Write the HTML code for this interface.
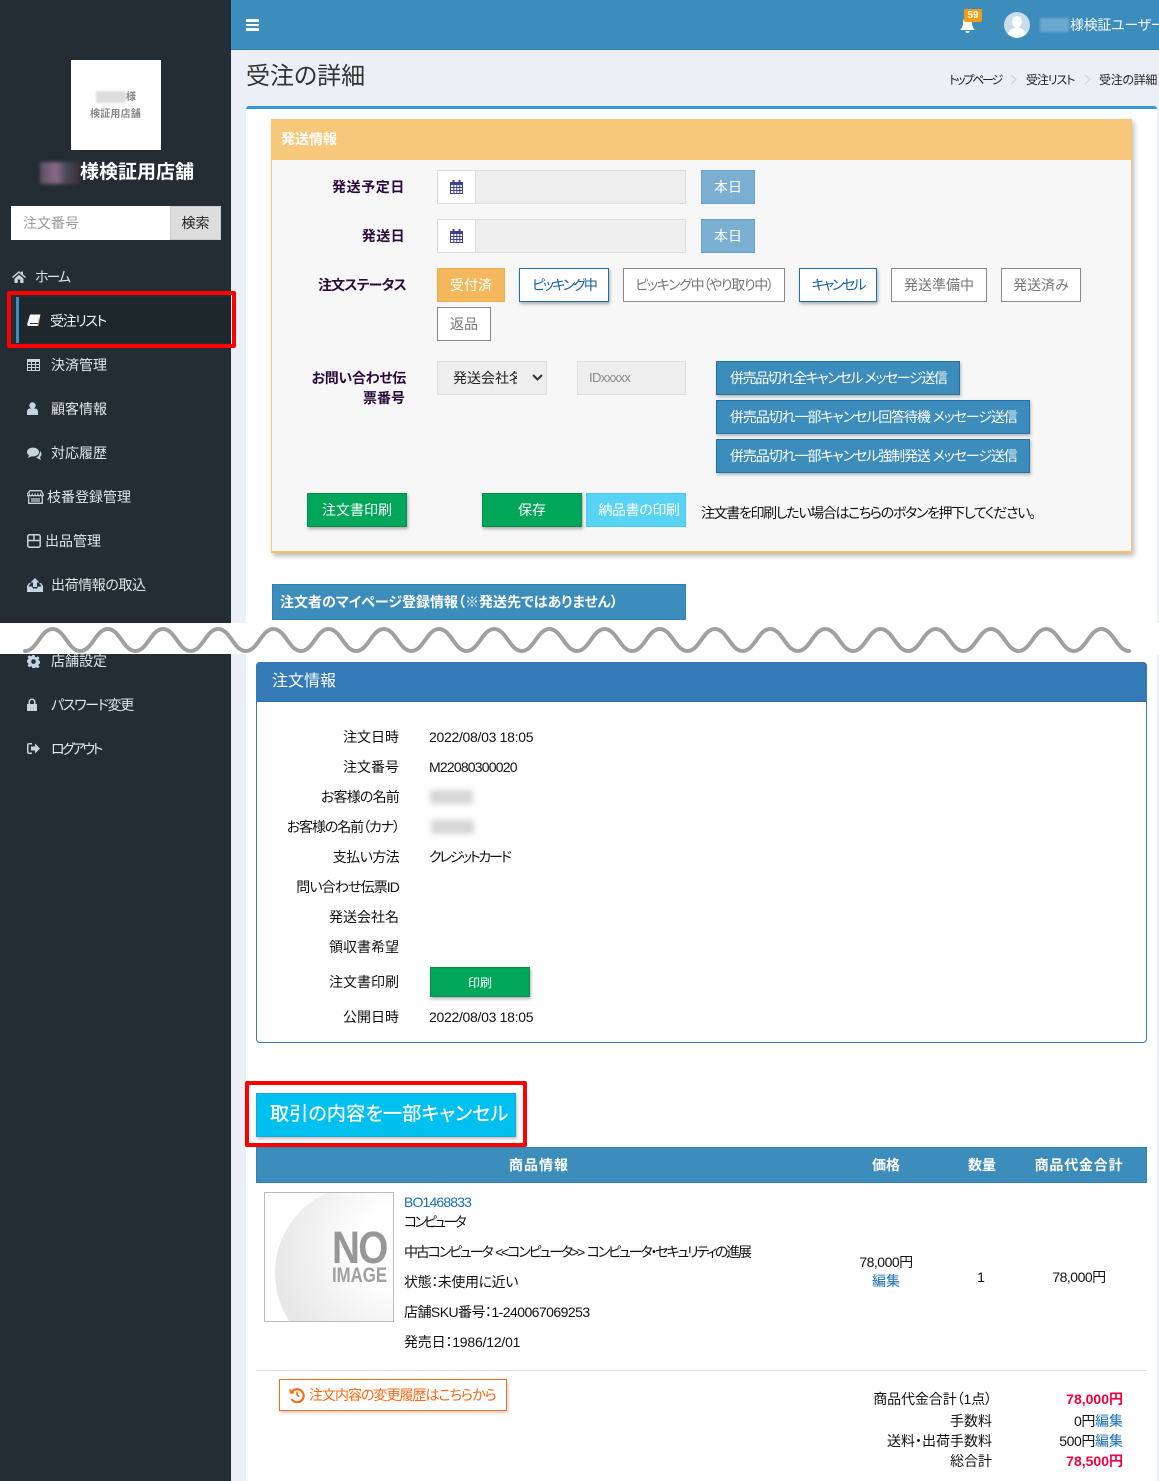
<!DOCTYPE html>
<html lang="ja"><head><meta charset="utf-8"><title>受注の詳細</title>
<style>
*{box-sizing:border-box}
html,body{margin:0;padding:0}
body{position:relative;width:1159px;height:1481px;overflow:hidden;background:#ebeff6;font-family:"Liberation Sans","Noto Sans CJK JP",sans-serif;font-size:14px;color:#111;font-feature-settings:"palt"}
.a{position:absolute}
.t{position:absolute;white-space:nowrap;line-height:20px;height:20px}
.r{text-align:right}
.c{text-align:center}
.m{color:#dfe6ea}
.l{color:#111;text-align:right;width:200px;left:199px}
.b{position:absolute;display:flex;align-items:center;justify-content:center;white-space:nowrap;border:1px solid #888;background:#fff;color:#777;height:34px}
.p{border-color:#1f6ea6;color:#14609e;box-shadow:1px 2px 3px rgba(0,0,0,.3)}
.s{background:#3c8dbc;border-color:#1f71a8;color:#fff;justify-content:flex-start;padding-left:13px;box-shadow:1px 2px 3px rgba(0,0,0,.25)}
.g{background:#00a65a;border-color:#0b8a4c;color:#fff;box-shadow:1px 2px 3px rgba(0,0,0,.3)}
.f{font-weight:bold;color:#2a0a3a}
svg{position:absolute;display:block}
.k{left:404px;color:#111}
.ic{fill:#c5d5e0}
</style></head><body>

<!-- sidebar -->
<div class="a" style="left:0;top:0;width:231px;height:1481px;background:#242d33"></div>
<div class="a" style="left:71px;top:60px;width:90px;height:90px;background:#fff"></div>
<div class="a" style="left:96px;top:91px;width:30px;height:12px;background:#ddd;filter:blur(1px)"></div>
<div class="t" style="left:126px;top:88px;font-size:10px;font-weight:bold;color:#888">様</div>
<div class="t" style="left:90px;top:105px;font-size:10px;font-weight:bold;color:#888;letter-spacing:.2px">検証用店舗</div>
<div class="a" style="left:40px;top:162px;width:40px;height:22px;background:linear-gradient(90deg,#5a4f60,#8a6a88 40%,#4a4a58 65%,#3a3038);filter:blur(1.5px)"></div>
<div class="t" style="left:80px;top:162px;font-size:19px;line-height:22px;height:22px;font-weight:bold;color:#fff">様検証用店舗</div>
<div class="a" style="left:11px;top:206px;width:159px;height:34px;background:#fff"></div>
<div class="t" style="left:23px;top:213px;color:#999">注文番号</div>
<div class="a" style="left:170px;top:206px;width:51px;height:34px;background:#ddd;border:1px solid #ccc"></div>
<div class="t c" style="left:170px;top:213px;width:51px;color:#222">検索</div>

<div class="a" style="left:16px;top:297px;width:215px;height:46px;background:#1e272c"></div>
<div class="a" style="left:16px;top:297px;width:3px;height:46px;background:#3c8dbc"></div>

<svg class="ic" style="left:12px;top:271px" width="14" height="12" viewBox="0 0 14 12"><path d="M7 0L0 6l1 1 6-5 6 5 1-1-3-2.600V.6H9v1.400zM2.500 7.500V12h3.300V8.500h2.400V12h3.300V7.500L7 3.700z"/></svg>
<div class="t m" style="left:35px;top:267px;letter-spacing:-2px">ホーム</div>

<svg style="left:27px;top:314px" width="14" height="13" viewBox="0 0 14 13"><path d="M3 .5h10.500L11 12H1.500C0 12 0 10 .7 8.500z" fill="#f4f8fa"/><path d="M3 9.500h8" stroke="#333" fill="none"/><path d="M12.500 4L11 12" stroke="#d98a3a" fill="none"/></svg>
<div class="t" style="left:50px;top:311px;color:#f2f5f7;letter-spacing:-1.400px">受注リスト</div>

<svg class="ic" style="left:27px;top:359px" width="13" height="12" viewBox="0 0 13 12"><path fill-rule="evenodd" d="M0 0h13v12H0zM1 3v2h3V3zm4 0v2h3V3zm4 0v2h3V3zM1 6v2h3V6zm4 0v2h3V6zm4 0v2h3V6zM1 9v2h3V9zm4 0v2h3V9zm4 0v2h3V9z"/></svg>
<div class="t m" style="left:51px;top:355px">決済管理</div>

<svg class="ic" style="left:27px;top:402px" width="11" height="13" viewBox="0 0 11 13"><circle cx="5.500" cy="3.500" r="3.200"/><path d="M0 13V9.500C0 7.500 1.500 6.500 3 6.500h5c1.500 0 3 1 3 3V13z"/></svg>
<div class="t m" style="left:51px;top:399px">顧客情報</div>

<svg class="ic" style="left:27px;top:447px" width="15" height="13" viewBox="0 0 15 13"><ellipse cx="6" cy="5" rx="6" ry="4.500"/><path d="M2 8L1 11l4-2zM13 4c2 2 2 4.500 0 6l1 3-4-2H8c2 0 5-3 5-7z"/></svg>
<div class="t m" style="left:51px;top:443px">対応履歴</div>

<svg style="left:27px;top:490px" width="17" height="14" viewBox="0 0 17 14" fill="none" stroke="#c5d5e0" stroke-width="1.300"><path d="M3 .7h11l2.300 4c0 1.500-2.300 1.500-2.700 0-.5 1.500-2.400 1.500-2.800 0-.5 1.500-2.400 1.500-2.800 0-.5 1.500-2.400 1.500-2.800 0-.5 1.500-2.400 1.500-2.800 0-.4 1.500-2.700 1.500-2.700 0zM1.700 6.500v6.800h13.600V6.500M4 9h9M4 11h9"/></svg>
<div class="t m" style="left:47px;top:487px">枝番登録管理</div>

<svg style="left:27px;top:534px" width="14" height="14" viewBox="0 0 14 14" fill="none" stroke="#c5d5e0" stroke-width="1.500"><path d="M2.500.8h9a1.700 1.700 0 0 1 1.700 1.700v9a1.700 1.700 0 0 1-1.700 1.700h-9a1.700 1.700 0 0 1-1.700-1.700v-9A1.700 1.700 0 0 1 2.500.8zM1 6.500h12M7 1v5.500"/></svg>
<div class="t m" style="left:45px;top:531px">出品管理</div>

<svg class="ic" style="left:27px;top:578px" width="16" height="14" viewBox="0 0 16 14"><path d="M8 0l4.500 4.500H10V9H6V4.500H3.500z"/><path d="M0 8l2-3h1.500v1.300H2.800L1.500 8.500H5l1 2h4l1-2h3.500L13.200 6.300h-.7V5H14l2 3v6H0z"/></svg>
<div class="t m" style="left:51px;top:575px;letter-spacing:-.4px">出荷情報の取込</div>

<svg class="ic" style="left:27px;top:655px" width="13" height="13" viewBox="0 0 13 13"><path fill-rule="evenodd" d="M5.300 0h2.400l.3 1.800 1.300.6L10.800 1.300l1.700 1.700-1.100 1.500.6 1.300 1.900.3v2.400l-1.900.3-.6 1.300 1.100 1.500-1.700 1.700-1.500-1.100-1.300.6-.3 1.900H5.300L5 11.800l-1.300-.6-1.500 1.100L.5 10.600l1.100-1.500L1 7.800-.9 7.500V5.100L1 4.800l.6-1.300L.5 2 2.200.3l1.500 1.100L5 .8zM6.500 4.300a2.300 2.300 0 1 0 0 4.600 2.300 2.300 0 0 0 0-4.600z"/></svg>
<div class="t m" style="left:51px;top:651px">店舗設定</div>

<svg class="ic" style="left:27px;top:698px" width="10" height="13" viewBox="0 0 10 13"><path fill-rule="evenodd" d="M0 6h1.500V4a3.500 3.500 0 0 1 7 0v2H10v7H0zM3 6h4V4a2 2 0 0 0-4 0z"/></svg>
<div class="t m" style="left:51px;top:695px;letter-spacing:-1.300px">パスワード変更</div>

<svg class="ic" style="left:27px;top:743px" width="13" height="11" viewBox="0 0 13 11"><path d="M5 0H2C.8 0 0 .8 0 2v7c0 1.200.8 2 2 2h3V9.500H2c-.4 0-.5-.2-.5-.5V2c0-.3.1-.5.5-.5h3z"/><path d="M8 .5l5 5-5 5V7.500H4v-4h4z"/></svg>
<div class="t m" style="left:51px;top:739px;letter-spacing:-2.600px">ログアウト</div>

<!-- header -->
<div class="a" style="left:231px;top:0;width:928px;height:50px;background:#3c8dbc;border-bottom:1px solid #367fa9"></div>
<div class="a" style="left:246px;top:19px;width:13px;height:2.500px;background:#fff"></div>
<div class="a" style="left:246px;top:23.500px;width:13px;height:2.500px;background:#fff"></div>
<div class="a" style="left:246px;top:28px;width:13px;height:2.500px;background:#fff"></div>
<svg style="left:960px;top:17px" width="15" height="16" viewBox="0 0 15 16"><path d="M7.500 0C4 0 3 3 3 6c0 3-1 5-3 7h15c-2-2-3-4-3-7 0-3-1-6-4.500-6zM5.500 14a2 2 0 0 0 4 0z" fill="#fff"/></svg>
<div class="a" style="left:964px;top:9px;width:18px;height:13px;background:#f39c12;border-radius:2px;color:#fff;font-size:10px;font-weight:bold;line-height:13px;text-align:center">59</div>
<svg style="left:1004px;top:12px" width="26" height="26" viewBox="0 0 26 26"><circle cx="13" cy="13" r="13" fill="#c9dcea"/><ellipse cx="13" cy="10" rx="5" ry="6" fill="#fff"/><path d="M4 22c1-5 5-6 9-6s8 1 9 6a13 13 0 0 1-18 0z" fill="#fff"/></svg>
<div class="a" style="left:1040px;top:18px;width:29px;height:14px;background:#6aa8cf;filter:blur(1px)"></div>
<div class="t" style="left:1070px;top:15px;color:#f4f8fb;letter-spacing:-.3px">様検証ユーザー</div>

<!-- title -->
<div class="t" style="left:246px;top:63px;font-size:24px;line-height:28px;height:28px;color:#333">受注の詳細</div>
<div class="t" style="left:949px;top:70px;font-size:12px;color:#222;letter-spacing:-2.200px">トップページ</div>
<div class="t" style="left:1026px;top:70px;font-size:12px;color:#222;letter-spacing:-1.100px">受注リスト</div>
<div class="t" style="left:1099px;top:70px;font-size:12px;color:#222;letter-spacing:-.3px">受注の詳細</div>
<svg style="left:1010px;top:74px" width="8" height="11" fill="none" stroke="#ccd" stroke-width="1"><path d="M1 1l5 4.500L1 10"/></svg>
<svg style="left:1084px;top:74px" width="8" height="11" fill="none" stroke="#ccd" stroke-width="1"><path d="M1 1l5 4.500L1 10"/></svg>

<!-- main card -->
<div class="a" style="left:246px;top:106px;width:911px;height:1375px;background:#fff;border-top:3px solid #3497da;border-radius:3px 3px 0 0"></div>

<!-- shipping panel -->
<div class="a" style="left:271px;top:119px;width:861px;height:434px;background:#f7f7f7;border:1px solid #f8c87a;border-bottom:2px solid #f5c160;box-shadow:2px 3px 5px rgba(0,0,0,.28)"></div>
<div class="a" style="left:271px;top:119px;width:861px;height:41px;background:#f8c87a"></div>
<div class="t" style="left:281px;top:129px;font-weight:bold;color:#fff">発送情報</div>

<div class="t f r" style="left:205px;top:177px;width:200px;letter-spacing:.6px">発送予定日</div>
<div class="t f r" style="left:205px;top:226px;width:200px;letter-spacing:.4px">発送日</div>
<div class="t f r" style="left:205px;top:275px;width:201px;letter-spacing:-.8px">注文ステータス</div>
<div class="t f r" style="left:205px;top:368px;width:201px;letter-spacing:-.3px">お問い合わせ伝</div>
<div class="t f r" style="left:205px;top:388px;width:200px">票番号</div>

<div class="a" style="left:437px;top:170px;width:39px;height:34px;background:#fff;border:1px solid #ddd"></div>
<div class="a" style="left:475px;top:170px;width:211px;height:34px;background:#eee;border:1px solid #ddd"></div>
<div class="a" style="left:437px;top:219px;width:39px;height:34px;background:#fff;border:1px solid #ddd"></div>
<div class="a" style="left:475px;top:219px;width:211px;height:34px;background:#eee;border:1px solid #ddd"></div>
<svg style="left:450px;top:180px" width="13" height="14" viewBox="0 0 13 14"><path fill="#41408f" fill-rule="evenodd" d="M0 2h2.500V0h2v2h4V0h2v2H13v12H0zM1 5v2h2.300V5zm3.300 0v2h2V5zm3 0v2h2V5zm3 0v2H12V5zM1 8v2h2.300V8zm3.300 0v2h2V8zm3 0v2h2V8zm3 0v2H12V8zM1 11v2h2.300v-2zm3.300 0v2h2v-2zm3 0v2h2v-2zm3 0v2H12v-2z"/></svg>
<svg style="left:450px;top:229px" width="13" height="14" viewBox="0 0 13 14"><path fill="#41408f" fill-rule="evenodd" d="M0 2h2.500V0h2v2h4V0h2v2H13v12H0zM1 5v2h2.300V5zm3.300 0v2h2V5zm3 0v2h2V5zm3 0v2H12V5zM1 8v2h2.300V8zm3.300 0v2h2V8zm3 0v2h2V8zm3 0v2H12V8zM1 11v2h2.300v-2zm3.300 0v2h2v-2zm3 0v2h2v-2zm3 0v2H12v-2z"/></svg>
<div class="b" style="left:701px;top:170px;width:54px;background:#7bafd2;border-color:#6aa3cb;color:#fff">本日</div>
<div class="b" style="left:701px;top:219px;width:54px;background:#7bafd2;border-color:#6aa3cb;color:#fff">本日</div>

<div class="b" style="left:437px;top:268px;width:68px;background:#f4b85c;border-color:#f0ad4e;color:#fff">受付済</div>
<div class="b p" style="left:519px;top:268px;width:90px;letter-spacing:-2px">ピッキング中</div>
<div class="b" style="left:623px;top:268px;width:162px;letter-spacing:-1.300px">ピッキング中（やり取り中）</div>
<div class="b p" style="left:799px;top:268px;width:78px;letter-spacing:-2.200px">キャンセル</div>
<div class="b" style="left:891px;top:268px;width:96px">発送準備中</div>
<div class="b" style="left:1001px;top:268px;width:80px">発送済み</div>
<div class="b" style="left:437px;top:307px;width:54px">返品</div>

<div class="a" style="left:437px;top:361px;width:110px;height:34px;background:#eee;border:1px solid #ddd"></div>
<div class="a" style="left:453px;top:368px;width:64px;height:20px;overflow:hidden;line-height:20px;white-space:nowrap;color:#222">発送会社名</div>
<svg style="left:532px;top:374px" width="11" height="8" fill="none" stroke="#333" stroke-width="2"><path d="M1 1l4.500 4.500L10 1"/></svg>
<div class="a" style="left:577px;top:361px;width:109px;height:34px;background:#eee;border:1px solid #ddd"></div>
<div class="t" style="left:589px;top:368px;font-size:13px;color:#888;letter-spacing:-.6px">IDxxxxx</div>
<div class="b s" style="left:716px;top:361px;width:244px;letter-spacing:-1.400px">併売品切れ全キャンセル メッセージ送信</div>
<div class="b s" style="left:716px;top:400px;width:314px;letter-spacing:-1.100px">併売品切れ一部キャンセル回答待機 メッセージ送信</div>
<div class="b s" style="left:716px;top:439px;width:314px;letter-spacing:-1.100px">併売品切れ一部キャンセル強制発送 メッセージ送信</div>

<div class="b g" style="left:307px;top:493px;width:100px">注文書印刷</div>
<div class="b g" style="left:482px;top:493px;width:100px">保存</div>
<div class="b" style="left:586px;top:493px;width:100px;background:#58d3f4;border-color:#42c8ee;color:#fff;letter-spacing:-.4px;padding-left:6px">納品書の印刷</div>
<div class="t" style="left:701px;top:503px;color:#111;letter-spacing:-1.350px">注文書を印刷したい場合はこちらのボタンを押下してください。</div>

<div class="a" style="left:272px;top:584px;width:414px;height:36px;background:#3c8dbc;border:1px solid #2f82b6"></div>
<div class="t" style="left:280px;top:592px;font-weight:bold;color:#fff">注文者のマイページ登録情報（※発送先ではありません）</div>

<!-- band -->
<div class="a" style="left:0;top:623px;width:1159px;height:31px;background:#fff"></div>
<svg style="left:0;top:620px;overflow:visible" width="1159" height="40" viewBox="0 620 1159 40"><path fill="none" stroke="#a0a0a0" stroke-width="4" stroke-linecap="round" d="M25 651c12 0 15.600-22 27.600-22s15.600 22 27.600 22s15.600-22 27.600-22s15.600 22 27.600 22s15.600-22 27.600-22s15.600 22 27.600 22s15.600-22 27.600-22s15.600 22 27.600 22s15.600-22 27.600-22s15.600 22 27.600 22s15.600-22 27.600-22s15.600 22 27.600 22s15.600-22 27.600-22s15.600 22 27.600 22s15.600-22 27.600-22s15.600 22 27.600 22s15.600-22 27.600-22s15.600 22 27.600 22s15.600-22 27.600-22s15.600 22 27.600 22s15.600-22 27.600-22s15.600 22 27.600 22s15.600-22 27.600-22s15.600 22 27.600 22s15.600-22 27.600-22s15.600 22 27.600 22s15.600-22 27.600-22s15.600 22 27.600 22s15.600-22 27.600-22s15.600 22 27.600 22s15.600-22 27.600-22s15.600 22 27.600 22s15.600-22 27.600-22s15.600 22 27.600 22s15.600-22 27.600-22s15.600 22 27.600 22s15.600-22 27.600-22s15.600 22 27.600 22s15.600-22 27.600-22s15.600 22 27.600 22"/></svg>

<!-- order info -->
<div class="a" style="left:256px;top:662px;width:891px;height:381px;background:#fff;border:1px solid #337ab7;border-radius:4px"></div>
<div class="a" style="left:256px;top:662px;width:891px;height:40px;background:#337ab7;border-radius:4px 4px 0 0;border-bottom:1px solid #2e6da4"></div>
<div class="t" style="left:272px;top:672px;font-size:16px;line-height:20px;color:#fff">注文情報</div>

<div class="t l" style="top:727px">注文日時</div><div class="t" style="left:429px;top:727px;letter-spacing:-.3px">2022/08/03 18:05</div>
<div class="t l" style="top:757px">注文番号</div><div class="t" style="left:429px;top:757px;letter-spacing:-.8px">M22080300020</div>
<div class="t l" style="top:787px;letter-spacing:-.8px">お客様の名前</div>
<div class="a" style="left:430px;top:790px;width:43px;height:14px;background:#bbb;opacity:.6;filter:blur(3px)"></div>
<div class="t l" style="top:817px;letter-spacing:-1.100px">お客様の名前（カナ）</div>
<div class="a" style="left:431px;top:820px;width:43px;height:14px;background:#bbb;opacity:.6;filter:blur(3px)"></div>
<div class="t l" style="top:847px;letter-spacing:-.6px">支払い方法</div><div class="t" style="left:429px;top:847px;letter-spacing:-2.200px">クレジットカード</div>
<div class="t l" style="top:877px;letter-spacing:-.9px">問い合わせ伝票ID</div>
<div class="t l" style="top:907px">発送会社名</div>
<div class="t l" style="top:937px">領収書希望</div>
<div class="t l" style="top:972px">注文書印刷</div>
<div class="b g" style="left:430px;top:967px;width:100px;height:30px;font-size:12px">印刷</div>
<div class="t l" style="top:1007px">公開日時</div><div class="t" style="left:429px;top:1007px;letter-spacing:-.3px">2022/08/03 18:05</div>

<!-- cancel -->
<div class="a" style="left:245px;top:1081px;width:282px;height:66px;border:4px solid #f00;border-radius:2px"></div>
<div class="a" style="left:256px;top:1093px;width:260px;height:44px;background:#00c0ef;border:1px solid #1aa5d8;box-shadow:1px 2px 3px rgba(0,0,0,.25)"></div>
<div class="t" style="left:270px;top:1101px;height:28px;line-height:28px;font-size:19px;color:#fff;letter-spacing:.2px;-webkit-text-stroke:.3px #fff">取引の内容を一部キャンセル</div>

<!-- table -->
<div class="a" style="left:256px;top:1147px;width:891px;height:36px;background:#3c8dbc;border:1px solid #2f82b6"></div>
<div class="t c" style="left:439px;top:1155px;width:200px;font-weight:bold;color:#fff;letter-spacing:1px">商品情報</div>
<div class="t c" style="left:846px;top:1155px;width:80px;font-weight:bold;color:#fff">価格</div>
<div class="t c" style="left:942px;top:1155px;width:80px;font-weight:bold;color:#fff">数量</div>
<div class="t c" style="left:1019px;top:1155px;width:120px;font-weight:bold;color:#fff;letter-spacing:.8px">商品代金合計</div>

<div class="a" style="left:264px;top:1192px;width:130px;height:130px;border:1px solid #bbb;background:#fff;overflow:hidden">
  <div class="a" style="left:10px;top:-8px;width:176px;height:176px;border-radius:50%;background:radial-gradient(circle at 72% 35%,#fff 25%,#f0f0f0 55%,#dedede 100%)"></div>
  <div class="t" style="left:67px;top:33px;height:44px;line-height:44px;font-size:45px;font-weight:bold;color:#979797;letter-spacing:-2px;transform:scaleX(.86);transform-origin:0 0">NO</div>
  <div class="t" style="left:67px;top:71px;height:24px;line-height:24px;font-size:21px;font-weight:bold;color:#a0a0a0;transform:scaleX(.8);transform-origin:0 0">IMAGE</div>
</div>
<div class="t" style="left:404px;top:1192px;color:#1a6fb5;letter-spacing:-.85px">BO1468833</div>
<div class="t k" style="top:1212px;letter-spacing:-2.800px">コンピュータ</div>
<div class="t k" style="top:1242px;letter-spacing:-2.150px;word-spacing:2px">中古コンピュータ &lt;&lt;コンピュータ&gt;&gt; コンピュータ・セキュリティの進展</div>
<div class="t k" style="top:1272px;letter-spacing:-.4px">状態：未使用に近い</div>
<div class="t k" style="top:1302px;letter-spacing:-.55px">店舗SKU番号：1-240067069253</div>
<div class="t k" style="top:1332px;letter-spacing:-.2px">発売日：1986/12/01</div>

<div class="t c" style="left:826px;top:1252px;width:120px;letter-spacing:-.5px">78,000円</div>
<div class="t c" style="left:846px;top:1271px;width:80px;color:#1a6fb5">編集</div>
<div class="t c" style="left:961px;top:1267px;width:40px">1</div>
<div class="t c" style="left:1019px;top:1267px;width:120px;letter-spacing:-.5px">78,000円</div>

<div class="a" style="left:256px;top:1370px;width:891px;height:1px;background:#ddd"></div>

<div class="a" style="left:279px;top:1379px;width:228px;height:32px;background:#fff;border:1px solid #ff6a13;box-shadow:1px 2px 3px rgba(0,0,0,.2)"></div>
<svg style="left:289px;top:1387px" width="16" height="16" viewBox="0 0 16 16" fill="none" stroke="#ff6a13" stroke-width="2.200"><path d="M3.500 4.200A6.500 6.500 0 1 1 2.500 12"/><path d="M8 4.500V8l2.300 1.800" stroke-width="1.600"/><path d="M.5 1.500l5.500 5H.5z" fill="#ff6a13" stroke="none"/></svg>
<div class="t" style="left:309px;top:1385px;color:#ff6a13;letter-spacing:-1px">注文内容の変更履歴はこちらから</div>

<div class="t r" style="left:792px;top:1389px;width:200px;letter-spacing:-.1px">商品代金合計（1点）</div>
<div class="t r" style="left:792px;top:1411px;width:200px">手数料</div>
<div class="t r" style="left:792px;top:1431px;width:200px">送料・出荷手数料</div>
<div class="t r" style="left:792px;top:1451px;width:200px">総合計</div>
<div class="t r" style="left:1023px;top:1389px;width:100px;color:#f0003c;font-weight:bold">78,000円</div>
<div class="t r" style="left:1023px;top:1411px;width:100px;letter-spacing:-.4px">0円<span style="color:#1a6fb5;letter-spacing:0">編集</span></div>
<div class="t r" style="left:1023px;top:1431px;width:100px;letter-spacing:-.4px">500円<span style="color:#1a6fb5;letter-spacing:0">編集</span></div>
<div class="t r" style="left:1023px;top:1451px;width:100px;color:#f0003c;font-weight:bold">78,500円</div>

<!-- red box sidebar -->
<div class="a" style="left:7px;top:291px;width:229px;height:57px;border:4px solid #f00;border-radius:2px"></div>
</body></html>
